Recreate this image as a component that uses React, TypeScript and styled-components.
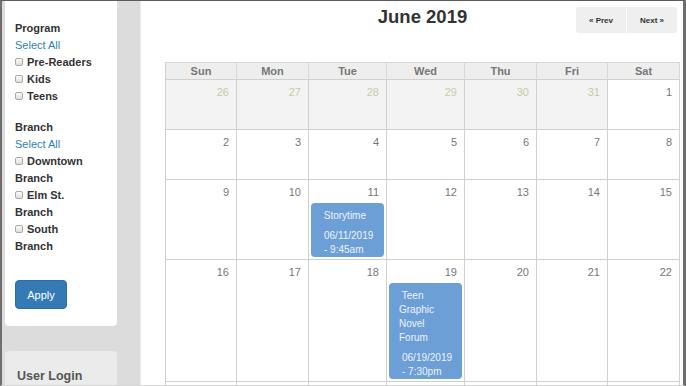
import React from 'react';
import styled, { createGlobalStyle } from 'styled-components';

const GlobalStyle = createGlobalStyle`
  html, body {
    margin: 0;
    padding: 0;
    background: #ffffff;
  }
  body {
    font-family: "Liberation Sans", Arial, sans-serif;
  }
`;

type CalEvent = { title: string; when: string };
type Day = { n: number; other?: boolean; event?: CalEvent };

const weekdays = ['Sun', 'Mon', 'Tue', 'Wed', 'Thu', 'Fri', 'Sat'];

const buildWeeks = (): Day[][] => {
  const days: Day[] = [];
  [26, 27, 28, 29, 30, 31].forEach(n => days.push({ n, other: true }));
  for (let n = 1; n <= 30; n++) days.push({ n });
  for (let n = 1; n <= 6; n++) days.push({ n, other: true });
  days[16].event = { title: '\u00a0Storytime', when: '06/11/2019 - 9:45am' };
  days[24].event = { title: '\u00a0Teen Graphic Novel Forum', when: '06/19/2019 - 7:30pm' };
  const weeks: Day[][] = [];
  for (let i = 0; i < days.length; i += 7) weeks.push(days.slice(i, i + 7));
  return weeks;
};

const filters = [
  { heading: 'Program', options: ['Pre-Readers', 'Kids', 'Teens'] },
  { heading: 'Branch', options: ['Downtown Branch', 'Elm St. Branch', 'South Branch'] },
];

const App = () => {
  const weeks = buildWeeks();

  return (
    <>
      <GlobalStyle />
      <Frame>
        <Sidebar>
          <FilterPanel>
            {filters.map(group => (
              <FilterGroup key={group.heading}>
                <GroupHeading>{group.heading}</GroupHeading>
                <SelectAll href="#">Select All</SelectAll>
                {group.options.map(option => (
                  <OptionLabel key={option}>
                    <Check type="checkbox" />
                    {option}
                  </OptionLabel>
                ))}
              </FilterGroup>
            ))}
            <ApplyButton>Apply</ApplyButton>
          </FilterPanel>
          <LoginPanel>
            <LoginTitle>User Login</LoginTitle>
          </LoginPanel>
        </Sidebar>

        <Main>
          <CalendarHeader>
            <span />
            <MonthTitle>June 2019</MonthTitle>
            <NavGroup>
              <NavButton $side="left">« Prev</NavButton>
              <NavButton $side="right">Next »</NavButton>
            </NavGroup>
          </CalendarHeader>

          <Grid>
            {weekdays.map(d => (
              <HeadCell key={d}>{d}</HeadCell>
            ))}
            {weeks.map((week, wi) =>
              week.map((day, di) => (
                <DayCell key={`${wi}-${di}`} $other={day.other && wi === 0}>
                  <DayNumber $other={day.other}>{day.n}</DayNumber>
                  {day.event && (
                    <EventCard>
                      <EventTitle>{day.event.title}</EventTitle>
                      <EventTime>{day.event.when}</EventTime>
                    </EventCard>
                  )}
                </DayCell>
              ))
            )}
          </Grid>
        </Main>
      </Frame>
    </>
  );
};

export default App;

const Frame = styled.div`
  width: 686px;
  height: 386px;
  box-sizing: border-box;
  border-top: 1px solid #5c5c5c;
  border-left: 2px solid #6e6e6e;
  border-right: 3px solid #6e6e6e;
  border-bottom: 1px solid #d4d4d4;
  display: flex;
  overflow: hidden;
  background: #ffffff;
`;

const Sidebar = styled.div`
  width: 139px;
  flex-shrink: 0;
  box-sizing: border-box;
  background: #dcdcdc;
  border-right: 1px solid #ececec;
  padding-left: 3px;
  display: flex;
  flex-direction: column;
`;

const FilterPanel = styled.div`
  width: 112px;
  box-sizing: border-box;
  background: #ffffff;
  border-radius: 0 0 4px 4px;
  padding: 19px 24px 17px 10px;
`;

const FilterGroup = styled.div`
  margin-bottom: 14px;
  font-size: 11px;
  line-height: 17px;
`;

const GroupHeading = styled.div`
  font-weight: bold;
  color: #333333;
`;

const SelectAll = styled.a`
  display: block;
  color: #2f7fb1;
  text-decoration: none;
  white-space: nowrap;
`;

const OptionLabel = styled.label`
  display: block;
  font-weight: bold;
  color: #333333;
`;

const Check = styled.input`
  appearance: none;
  width: 8px;
  height: 8px;
  margin: 0 4px 0 0;
  box-sizing: border-box;
  border: 1px solid #a9a9a9;
  border-radius: 2px;
  background: linear-gradient(#fbfbfb, #dedede);
`;

const ApplyButton = styled.button`
  display: block;
  margin-top: 25px;
  width: 52px;
  height: 29px;
  padding: 0;
  border: 1px solid #2e6da4;
  border-radius: 4px;
  background: #337ab7;
  color: #ffffff;
  font-family: inherit;
  font-size: 11px;
`;

const LoginPanel = styled.div`
  margin-top: 25px;
  width: 112px;
  flex: 1;
  box-sizing: border-box;
  background: #ebebeb;
  border-radius: 4px 4px 0 0;
  padding: 18px 12px 0;
`;

const LoginTitle = styled.div`
  font-size: 12.5px;
  font-weight: bold;
  color: #555555;
`;

const Main = styled.div`
  flex: 1;
  min-width: 0;
  padding: 6px 2px 0 24px;
  display: flex;
  flex-direction: column;
`;

const CalendarHeader = styled.div`
  width: 515px;
  display: grid;
  grid-template-columns: 1fr auto 1fr;
  align-items: start;
`;

const MonthTitle = styled.h2`
  margin: 0;
  font-size: 18.5px;
  line-height: 20px;
  font-weight: bold;
  color: #333333;
`;

const NavGroup = styled.div`
  justify-self: end;
  display: flex;
  gap: 1px;
  margin-right: 3px;
`;

const NavButton = styled.button<{ $side: 'left' | 'right' }>`
  width: 50px;
  height: 26px;
  padding: 0;
  border: none;
  background: #efefef;
  color: #333333;
  font-family: inherit;
  font-size: 8px;
  font-weight: bold;
  border-radius: ${({ $side }) => ($side === 'left' ? '3px 0 0 3px' : '0 3px 3px 0')};
`;

const Grid = styled.div`
  margin-top: 29px;
  width: 515px;
  box-sizing: border-box;
  display: grid;
  grid-template-columns: 71px 72px 78px 78px 72px 71px 72px;
  border-left: 1px solid #d0d0d0;
  border-top: 1px solid #d8d8d8;
`;

const HeadCell = styled.div`
  height: 16px;
  line-height: 16px;
  background: #eeeeee;
  border-right: 1px solid #d8d8d8;
  border-bottom: 1px solid #d0d0d0;
  text-align: center;
  font-size: 11px;
  font-weight: bold;
  color: #777777;
`;

const DayCell = styled.div<{ $other?: boolean }>`
  min-height: 50px;
  box-sizing: border-box;
  background: ${({ $other }) => ($other ? '#f3f3f3' : '#ffffff')};
  border-right: 1px solid #d0d0d0;
  border-bottom: 1px solid #d0d0d0;
  padding: 5px 0 2px;
`;

const DayNumber = styled.div<{ $other?: boolean }>`
  text-align: right;
  padding-right: 7px;
  font-size: 11px;
  line-height: 15px;
  color: ${({ $other }) => ($other ? '#c8cb9f' : '#777777')};
`;

const EventCard = styled.div`
  margin: 3px 2px 0;
  padding: 6px 0 0;
  background: #6c9fd6;
  border-radius: 4px;
  color: #eef3fa;
  font-size: 10px;
  line-height: 14px;
  overflow: hidden;
`;

const EventTitle = styled.div`
  padding: 0 8px 0 10px;
  margin-bottom: 6px;
`;

const EventTime = styled.div`
  padding: 0 6px 0 13px;
`;
